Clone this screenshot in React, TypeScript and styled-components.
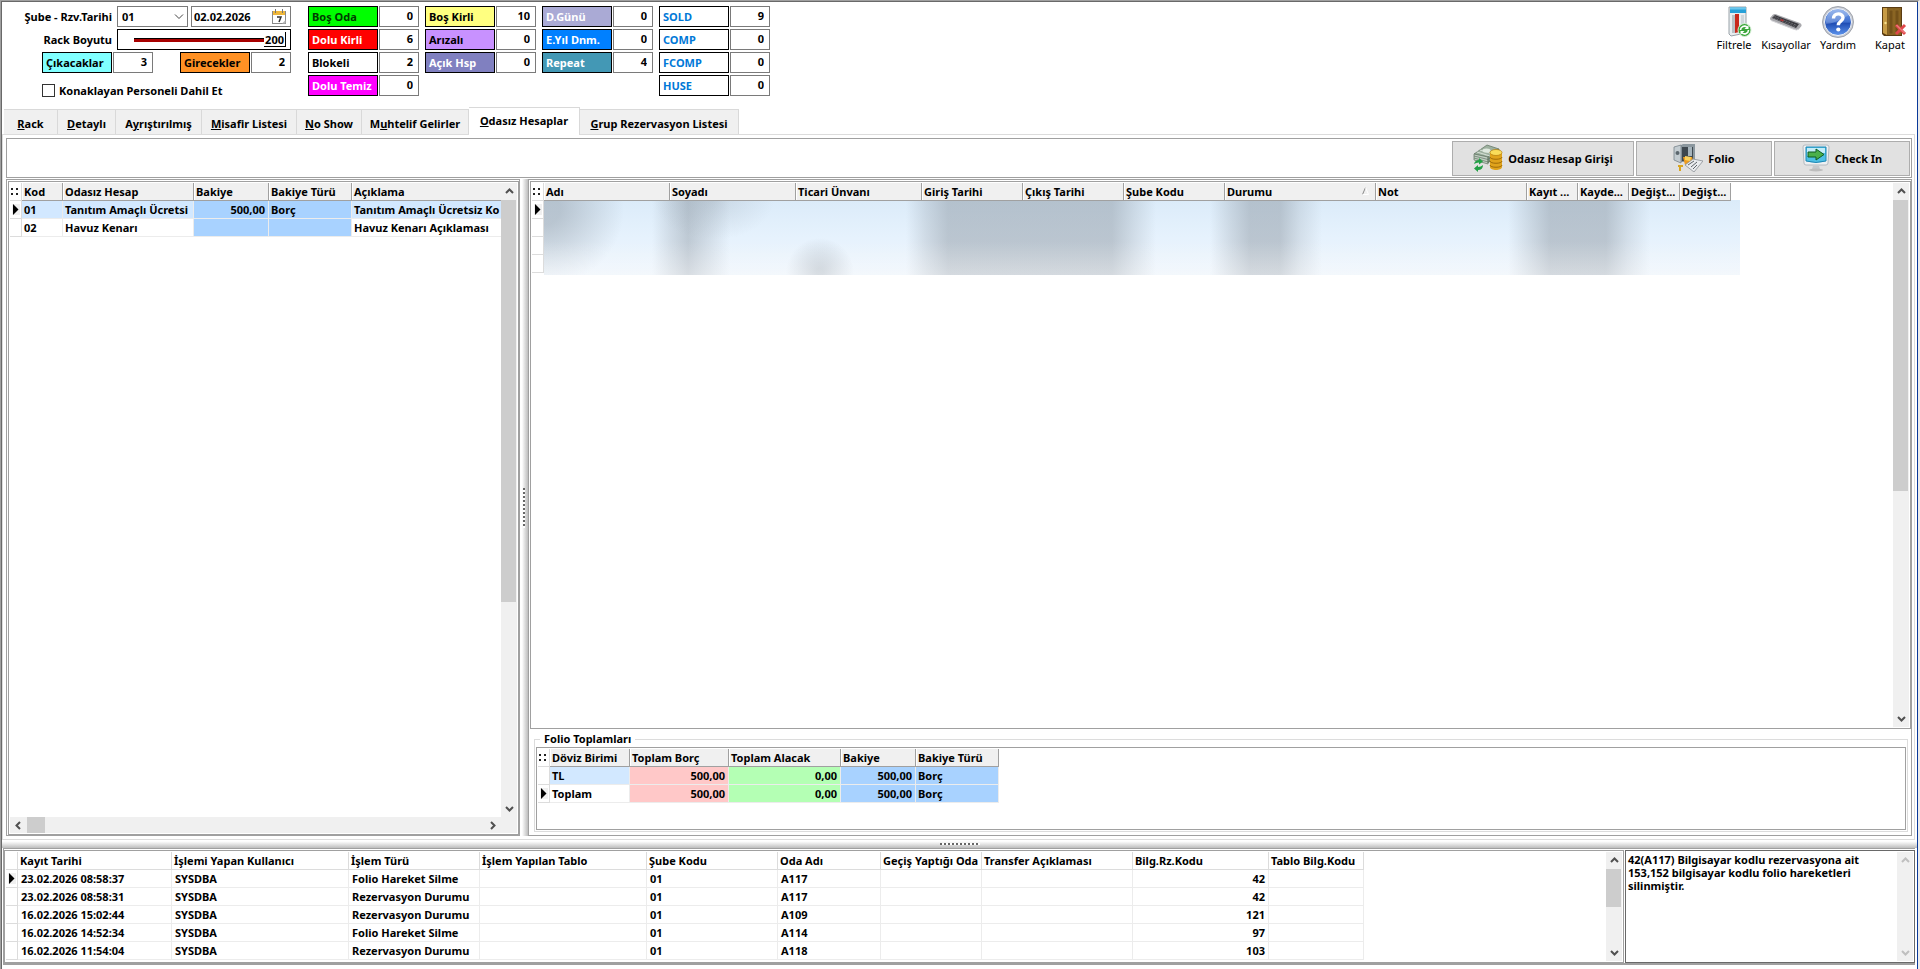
import React from 'react';
import styled, { createGlobalStyle, css } from 'styled-components';

const line = '#a0a0a0';
const soft = '#dcdcdc';
const blueCell = '#a8d2ff';
const selected = '#d2e8ff';

const GlobalStyle = createGlobalStyle`
  *, *::before, *::after { box-sizing: border-box; }
  body { margin: 0; background: #fff; }
  body, button, input, select, textarea, table, fieldset {
    font-family: "Noto Sans", "Open Sans", sans-serif;
    font-size: 11px;
    font-weight: 700;
    color: #000;
  }
`;

/* ---------- window frame ---------- */

const Window = styled.div`
  display: flex;
  flex-direction: column;
  min-height: 100vh;
  padding: 1px 1px 4px 1px;
  border: solid ${line};
  border-width: 1px 0 0 1px;
  border-right: 2px solid #ececec;
  box-shadow: inset 1px 1px #696969, inset -1px 0 #0a3a9a;
`;

const Header = styled.header`
  display: flex;
  align-items: flex-start;
  height: 105px;
  padding: 4px 1px 0 10px;
`;

/* ---------- header form ---------- */

const Form = styled.form`
  display: flex;
  flex-direction: column;
  gap: 2px;
  width: 279px;
  margin-right: 17px;
`;

const FormRow = styled.div`
  display: flex;
  align-items: center;
  justify-content: flex-end;
  height: 21px;
  gap: 5px;
`;

const Fields = styled.div`
  display: flex;
  justify-content: space-between;
  width: 174px;
`;

const CounterRow = styled.div`
  display: flex;
  justify-content: space-between;
  margin-left: 30px;
`;

const CheckRow = styled.div`
  display: flex;
  align-items: center;
  gap: 4px;
  height: 30px;
  margin-left: 30px;
`;

const SelectBox = styled.div`
  position: relative;
  width: 71px;
  height: 21px;
  svg { position: absolute; right: 4px; top: 7px; pointer-events: none; }
`;

const Select = styled.select`
  appearance: none;
  width: 100%;
  height: 100%;
  padding: 0 4px 1px;
  border: 1px solid #7a7a7a;
  border-radius: 0;
  background: #fff;
`;

const DateBox = styled.div`
  display: flex;
  align-items: center;
  width: 100px;
  height: 21px;
  border: 1px solid #7a7a7a;
`;

const DateInput = styled.input`
  flex: 1;
  min-width: 0;
  padding: 0 2px 1px;
  border: 0;
  outline: 0;
`;

const IconButton = styled.button`
  display: flex;
  padding: 0 4px 1px 0;
  border: 0;
  background: none;
`;

const SliderBox = styled.div`
  display: flex;
  align-items: center;
  width: 100%;
  height: 21px;
  padding: 0 4px 0 16px;
  border: 1px solid #000;
`;

const Slider = styled.input`
  appearance: none;
  flex: 1;
  min-width: 0;
  height: 4px;
  margin: 0;
  border-top: 1px solid #000;
  background: #a80000;
  &::-webkit-slider-thumb { appearance: none; width: 0; height: 0; }
`;

const SliderValue = styled.output`
  height: 15px;
  padding: 0 1px 0 1px;
  border: solid #000;
  border-width: 0 1px 1px 0;
  line-height: 15px;
`;

const Checkbox = styled.input`
  appearance: none;
  width: 13px;
  height: 13px;
  margin: 0;
  border: 1px solid #333;
  background: #fff;
`;

/* ---------- coloured counters ---------- */

const Counters = styled.div`
  display: flex;
  align-items: flex-start;
  gap: 6px;
`;

const CounterColumn = styled.div`
  display: flex;
  flex-direction: column;
  gap: 2px;
`;

const Counter = styled.div`
  display: flex;
  gap: 1px;
`;

const CounterLabel = styled.label<{ $bg: string; $fg: string }>`
  width: 70px;
  height: 21px;
  padding-left: 3px;
  border: 1px solid #000;
  line-height: 20px;
  white-space: nowrap;
  background: ${(p) => p.$bg};
  color: ${(p) => p.$fg};
`;

const CounterValue = styled.input`
  width: 40px;
  height: 21px;
  padding: 0 5px 2px 0;
  border: 1px solid #7a7a7a;
  text-align: right;
  background: #fff;
`;

/* ---------- header actions ---------- */

const Actions = styled.nav`
  display: flex;
  margin-left: auto;
`;

const Action = styled.button`
  display: flex;
  flex-direction: column;
  align-items: center;
  width: 52px;
  padding: 0;
  border: 0;
  background: none;
  font-weight: 400;
  line-height: 14px;
  svg { display: block; overflow: visible; }
`;

/* ---------- tabs ---------- */

const Tabs = styled.div`
  display: flex;
  align-items: flex-end;
  height: 27px;
  padding-left: 2px;
`;

const Tab = styled.button<{ $w: number; $active?: boolean }>`
  width: ${(p) => p.$w}px;
  height: 25px;
  padding: 2px 0 0;
  border: solid #d9d9d9;
  border-width: 1px 1px 0 0;
  background: #f0f0f0;
  white-space: nowrap;
  ${(p) =>
    p.$active &&
    css`
      height: 28px;
      margin-bottom: -1px;
      padding: 0 0 3px;
      background: #fff;
      position: relative;
    `}
`;

const TabPanel = styled.main`
  display: flex;
  flex-direction: column;
  flex: 1;
  margin-right: 2px;
  padding: 3px 2px 3px 3px;
  border: 1px solid ${soft};
`;

const Toolbar = styled.div`
  display: flex;
  justify-content: flex-end;
  gap: 2px;
  height: 40px;
  margin-bottom: 1px;
  padding: 2px 1px 1px 0;
  border: 1px solid ${line};
`;

const ToolButton = styled.button<{ $w: number }>`
  display: flex;
  align-items: center;
  justify-content: center;
  gap: 5px;
  width: ${(p) => p.$w}px;
  padding: 0 0 1px;
  border: 1px solid #adadad;
  background: #e1e1e1;
`;

/* ---------- split panels ---------- */

const Split = styled.div`
  display: flex;
  flex: 1;
`;

const Panel = styled.section<{ $w?: number }>`
  display: flex;
  flex-direction: column;
  min-width: 0;
  flex: ${(p) => (p.$w ? `0 0 ${p.$w}px` : '1')};
  border: 1px solid ${line};
  padding: 1px 0 0 1px;
`;

const Well = styled.div`
  display: flex;
  flex: 1;
  min-width: 0;
  border: 1px solid ${line};
  padding: 1px;
`;

const LeftWell = styled(Well)`
  flex-direction: column;
`;

const WellRow = styled.div`
  display: flex;
  flex: 1;
  min-height: 0;
`;

const Viewport = styled.div`
  flex: 1;
  min-width: 0;
  overflow: hidden;
`;

const Splitter = styled.div`
  display: flex;
  align-items: center;
  justify-content: center;
  width: 8px;
  background: linear-gradient(90deg, #fff 25%, #ececec 45%, #bdbdbd);
`;

const HSplitter = styled(Splitter)`
  width: auto;
  height: 8px;
  background: linear-gradient(#fff 15%, #e6e6e6 50%, #bdbdbd);
`;

const Grip = styled.i<{ $h?: boolean }>`
  width: ${(p) => (p.$h ? 40 : 2)}px;
  height: ${(p) => (p.$h ? 2 : 40)}px;
  background: repeating-linear-gradient(
    ${(p) => (p.$h ? '90deg' : '180deg')},
    #666 0 2px,
    #fff 2px 4px
  );
`;

/* ---------- scroll bars ---------- */

const Bar = styled.div<{ $h?: boolean }>`
  display: flex;
  flex-direction: ${(p) => (p.$h ? 'row' : 'column')};
  ${(p) => (p.$h ? 'height: 16px' : 'width: 16px')};
  flex: none;
  background: #f0f0f0;
`;

const BarButton = styled.button<{ $off?: boolean }>`
  display: flex;
  align-items: center;
  justify-content: center;
  flex: 0 0 17px;
  min-width: 16px;
  padding: 0;
  border: 0;
  background: none;
  color: ${(p) => (p.$off ? '#bfbfbf' : '#505050')};
`;

const Track = styled.div`
  flex: 1;
`;

const Thumb = styled.div<{ $size: number; $h?: boolean }>`
  ${(p) => (p.$h ? `width: ${p.$size}%; height: 100%` : `height: ${p.$size}%; width: 15px`)};
  background: #cdcdcd;
`;

const Corner = styled.div`
  display: flex;
  padding-right: 16px;
  background: #f0f0f0;
  > div { flex: 1; }
`;

const arrows = {
  up: 'M1 6 4.500 2.500 8 6',
  down: 'M1 3 4.500 6.500 8 3',
  left: 'M6 1 2.500 4.500 6 8',
  right: 'M3 1 6.500 4.500 3 8',
};

const Arrow = ({ d }: { d: keyof typeof arrows }) => (
  <svg width="9" height="9" viewBox="0 0 9 9" fill="none" stroke="currentColor" strokeWidth="2">
    <path d={arrows[d]} />
  </svg>
);

const ScrollBar = ({ size, h, off }: { size: number; h?: boolean; off?: boolean }) => (
  <Bar $h={h}>
    <BarButton $off={off} type="button" aria-label={h ? 'Sola' : 'Yukarı'}>
      <Arrow d={h ? 'left' : 'up'} />
    </BarButton>
    <Track>{size > 0 && <Thumb $size={size} $h={h} />}</Track>
    <BarButton $off={off} type="button" aria-label={h ? 'Sağa' : 'Aşağı'}>
      <Arrow d={h ? 'right' : 'down'} />
    </BarButton>
  </Bar>
);

/* ---------- data grids ---------- */

const Table = styled.table<{ $w: number }>`
  width: ${(p) => p.$w}px;
  table-layout: fixed;
  border-collapse: separate;
  border-spacing: 0;
`;

const HeadCell = styled.th<{ $flat?: boolean }>`
  position: relative;
  height: 18px;
  padding: 0 0 0 2px;
  border: solid ${(p) => (p.$flat ? soft : line)};
  border-width: 0 1px 1px 0;
  box-shadow: ${(p) => (p.$flat ? 'none' : 'inset 1px 0 #fff')};
  background: ${(p) => (p.$flat ? '#fff' : '#f0f0f0')};
  line-height: 17px;
  text-align: left;
  white-space: nowrap;
  svg { position: absolute; right: 6px; top: 4px; }
`;

const Cell = styled.td<{ $bg?: string; $right?: boolean; $flat?: boolean }>`
  height: 18px;
  padding: 0 3px 0 ${(p) => (p.$flat ? 3 : 2)}px;
  border: solid #ececec;
  border-width: 0 1px 1px 0;
  background: ${(p) => p.$bg || '#fff'};
  line-height: 17px;
  text-align: ${(p) => (p.$right ? 'right' : 'left')};
  white-space: nowrap;
`;

const MarkCell = styled.td`
  height: 18px;
  padding: 0 0 0 2px;
  border: solid ${soft};
  border-width: 0 1px 1px 0;
  line-height: 0;
  svg { display: block; }
`;

const DotsCell = styled.th`
  padding: 0 0 0 1px;
  border: solid ${soft};
  border-width: 0 1px 1px 0;
  svg { display: block; }
`;

const Marker = () => (
  <svg width="8" height="13" viewBox="0 0 8 13">
    <rect x="0" y="1" width="8" height="11" fill="#f0f0f0" />
    <path d="M1 1 6.500 6.500 1 12Z" fill="#000" />
  </svg>
);

const Dots = () => (
  <svg width="8" height="8" viewBox="0 0 8 8" fill="#222">
    <path d="M0 0h2v2H0zM5 0h2v2H5zM0 5h2v2H0zM5 5h2v2H5z" />
  </svg>
);

type Column = { t: string; w: number; right?: boolean; bg?: string; sorted?: boolean };

const Cols = ({ cols }: { cols: Column[] }) => (
  <colgroup>
    <col style={{ width: 12 }} />
    {cols.map((c, i) => (
      <col key={i} style={{ width: c.w }} />
    ))}
  </colgroup>
);

const Head = ({ cols, flat }: { cols: Column[]; flat?: boolean }) => (
  <thead>
    <tr>
      <DotsCell aria-label="Seçim">{!flat && <Dots />}</DotsCell>
      {cols.map((c, i) => (
        <HeadCell key={i} $flat={flat} scope="col">
          {c.t}
          {c.sorted && (
            <svg width="7" height="8" viewBox="0 0 7 8" fill="none">
              <path d="M.5 7.500 3.500.5" stroke="#888" />
              <path d="M3.500.5 6.500 7.500H.5" stroke="#fff" />
            </svg>
          )}
        </HeadCell>
      ))}
    </tr>
  </thead>
);

type GridProps = { cols: Column[]; rows: string[][]; current: number; tinted?: number; flat?: boolean };

const total = (cols: Column[]) => cols.reduce((s, c) => s + c.w, 12);

const Grid = ({ cols, rows, current, tinted, flat }: GridProps) => (
  <Table $w={total(cols)}>
    <Cols cols={cols} />
    <Head cols={cols} flat={flat} />
    <tbody>
      {rows.map((r, i) => (
        <tr key={i}>
          <MarkCell>{i === current && <Marker />}</MarkCell>
          {cols.map((c, j) => (
            <Cell key={j} $flat={flat} $right={c.right} $bg={c.bg || (i === tinted ? selected : undefined)}>
              {r[j]}
            </Cell>
          ))}
        </tr>
      ))}
    </tbody>
  </Table>
);

const MaskCell = styled.td`
  padding: 0;
  vertical-align: top;
`;

const Mask = styled.div`
  width: 1196px;
  height: 75px;
  margin: -1px 0 -2px 0;
  background:
    linear-gradient(rgba(255, 255, 255, 0) 55%, rgba(255, 255, 255, 0.35)),
    radial-gradient(ellipse 80px 76px at 0 10px, rgba(125, 135, 145, 0.4) 20%, rgba(125, 135, 145, 0)),
    radial-gradient(ellipse 34px 34px at 276px 72px, rgba(125, 135, 145, 0.36) 10%, rgba(125, 135, 145, 0)),
    radial-gradient(ellipse 60px 40px at 170px 0, rgba(125, 135, 145, 0.2), rgba(125, 135, 145, 0)),
    linear-gradient(
      90deg,
      transparent 108px, rgba(125, 135, 145, 0.2) 126px, rgba(125, 135, 145, 0.38) 144px, rgba(125, 135, 145, 0.22) 162px, transparent 186px,
      transparent 362px, rgba(125, 135, 145, 0.22) 382px, rgba(125, 135, 145, 0.42) 404px, rgba(125, 135, 145, 0.42) 568px, rgba(125, 135, 145, 0.2) 590px, transparent 612px,
      transparent 666px, rgba(125, 135, 145, 0.22) 686px, rgba(125, 135, 145, 0.42) 706px, rgba(125, 135, 145, 0.42) 736px, rgba(125, 135, 145, 0.18) 756px, transparent 778px,
      transparent 964px, rgba(125, 135, 145, 0.2) 984px, rgba(125, 135, 145, 0.42) 1006px, rgba(125, 135, 145, 0.42) 1062px, rgba(125, 135, 145, 0.18) 1084px, transparent 1106px
    ),
    linear-gradient(#dbebf9, #e6f2fd 50%, #edf4fb);
`;

/* ---------- totals ---------- */

const Totals = styled.fieldset`
  min-width: 0;
  margin: 2px 3px 3px 4px;
  padding: 0 1px 1px;
  border: 1px solid ${soft};
  legend {
    margin-left: 4px;
    padding: 0 4px;
    height: 16px;
    line-height: 16px;
  }
`;

const TotalsWell = styled(Well)`
  align-items: flex-start;
  height: 83px;
`;

/* ---------- log area ---------- */

const Log = styled.section`
  display: flex;
  margin: 0 2px 0 1px;
  border: solid ${line};
  border-width: 1px 0 2px 1px;
  padding: 1px 0 0 0;
`;

const LogWell = styled(Well)`
  height: 113px;
  margin-right: 1px;
`;

const MemoBox = styled.div`
  display: flex;
  width: 290px;
  height: 113px;
  border: 1px solid #696969;
  padding: 1px;
`;

const Memo = styled.textarea`
  flex: 1;
  min-width: 0;
  padding: 1px 0 0 1px;
  border: 0;
  outline: 0;
  resize: none;
  overflow: hidden;
  line-height: 13px;
`;

/* ---------- icons ---------- */

const Calendar = () => (
  <svg width="14" height="15" viewBox="0 0 14 15">
    <rect x=".5" y="2.500" width="13" height="12" fill="#fff" stroke="#8a8a8a" />
    <rect x="1" y="2" width="12" height="4" fill="#efb73a" />
    <path d="M3.500 0v4M10.500 0v4" stroke="#777" />
    <path d="M5 8h4L7 13" fill="none" stroke="#333" strokeWidth="1.500" />
    <path d="M10 14.500 13.500 11v3.500z" fill="#bbb" />
  </svg>
);

const FilterIcon = () => (
  <svg width="32" height="32" viewBox="-4 0 32 32">
    <path d="M7 1h17v26L9 30 7 28z" fill="#e9edf0" stroke="#9aa3a8" />
    <path d="M8 1.500h16V7H8z" fill="#27a0d8" />
    <path d="M8 1.500h16v2H8z" fill="#6cc8ee" />
    <path d="M10 9h3v18h-3z" fill="#b9c1c6" />
    <path d="M13 8h4v18l-4 1z" fill="#c8281c" />
    <path d="M19 9h3v12h-3z" fill="#cfd6da" />
    <circle cx="22.500" cy="24" r="6.500" fill="#3aa63a" stroke="#d8f0d8" />
    <path d="M18.500 24a4 4 0 0 1 6.500-3M26.500 24a4 4 0 0 1-6.500 3" fill="none" stroke="#fff" strokeWidth="1.600" />
    <path d="M26.500 19v4h-4zM18.500 29v-4h4z" fill="#fff" />
  </svg>
);

const KeyboardIcon = () => (
  <svg width="32" height="32" viewBox="0 0 32 32">
    <path d="M0 12 3 8.500Q5 7.500 8 9l22 8q2 1 1.500 3L29 23q-2 2-6 0L1 14.500Q0 13.500 0 12z" fill="#a9a9ad" />
    <path d="M2 12 5 9l24 9-3 4z" fill="#3b3b40" />
    <path d="M4.500 10.500 27 19.500M3.500 12 25 20.500" stroke="#77777d" strokeDasharray="2 1" strokeWidth=".8" />
    <path d="m11 13 3 1-1 1.500-3-1z" fill="#a33" />
    <path d="M1 14.500 23 23q4 2 6 0" fill="none" stroke="#d4d4d8" />
  </svg>
);

const HelpIcon = () => (
  <svg width="32" height="32" viewBox="0 0 32 32">
    <defs>
      <linearGradient id="help" x1="0" y1="0" x2="0" y2="1">
        <stop offset="0" stopColor="#7fa6ea" />
        <stop offset=".5" stopColor="#3c6dce" />
        <stop offset=".55" stopColor="#1f4db4" />
        <stop offset="1" stopColor="#5f96ee" />
      </linearGradient>
    </defs>
    <circle cx="16" cy="16" r="15.500" fill="#c9ccd3" stroke="#8f949e" strokeWidth=".8" />
    <circle cx="16" cy="16" r="13.500" fill="url(#help)" stroke="#f1f3f7" />
    <path d="M4 18C9 18 17 15 27 9 24 4 20 3 16 3 9 3 3 9 4 18z" fill="#fff" opacity=".22" />
    <path d="M11.500 12.500c0-6 9.500-6 9.500-.8 0 3.600-4.700 3.600-4.700 7.500" fill="none" stroke="#fff" strokeWidth="3.400" />
    <circle cx="16.300" cy="23.500" r="2.100" fill="#fff" />
  </svg>
);

const DoorIcon = () => (
  <svg width="32" height="32" viewBox="-1 0 32 32">
    <path d="M7 1h20v29H9l-2-2z" fill="#5a3c12" />
    <path d="M8 2h4v27l-4-2z" fill="#c79b45" />
    <path d="M12 2h14v27H12z" fill="#85601f" />
    <path d="M14 4h4v24h-4zM20 4h4v24h-4z" fill="#735119" stroke="#96702b" strokeWidth=".7" />
    <circle cx="10.500" cy="17" r="1.200" fill="#f6e08e" />
    <path d="m21 19 9 9M30 19l-9 9" stroke="#e0484a" strokeWidth="3" />
    <path d="m21.500 19 8 8" stroke="#f59a98" />
  </svg>
);

const MoneyIcon = () => (
  <svg width="30" height="28" viewBox="0 0 30 28">
    <path d="M1 10 14 1l12 4-11 8z" fill="#9db09f" stroke="#5e7260" strokeWidth=".7" />
    <path d="M1 10v6l14 4v-7z" fill="#c3cfc4" stroke="#5e7260" strokeWidth=".7" />
    <path d="m15 13 11-8v5l-11 9z" fill="#7f9385" stroke="#5e7260" strokeWidth=".7" />
    <path d="M1 12 15 15.500 26 7.500M1 14l14 4 11-8" fill="none" stroke="#5e7260" strokeWidth=".7" />
    <path d="m7 6 13 4M4 8l13 4" stroke="#e3ebe3" strokeWidth=".8" />
    <ellipse cx="13.500" cy="6.500" rx="4" ry="2" fill="#dfe9df" />
    <path d="M17 9v14c0 4 12 4 12 0V9z" fill="#e0a31c" />
    <path d="M17 13c0 3 12 3 12 0M17 17c0 3 12 3 12 0M17 21c0 3 12 3 12 0" fill="none" stroke="#a06c08" />
    <ellipse cx="23" cy="8.500" rx="6" ry="3" fill="#f9dc5a" stroke="#b07a0c" strokeWidth=".7" />
    <path d="M1 20q1-4 5-4v-2l4 3.500-4 3v-2q-3 0-5 1.500zM10 21q0 5-5 5v2l-4-3.500 4-3.500v2q3 0 5-2z" fill="#22a045" />
  </svg>
);

const FolioIcon = () => (
  <svg width="30" height="28" viewBox="0 0 30 28">
    <path d="M6 2 10 0h12v18H6z" fill="#8b979e" />
    <path d="M9 3h11v14H9z" fill="#3d474e" />
    <path d="m1 3 7-2v18l-7-3z" fill="#c3ccd1" stroke="#77838a" strokeWidth=".8" />
    <circle cx="4.500" cy="9" r="2" fill="#5b676e" />
    <path d="M15 3h4v9h-4z" fill="#a5b3bb" />
    <path d="M10 13h9l2 6-9 2z" fill="#ef9d1e" />
    <path d="m12 12 6 1-1 4-5-1z" fill="#fbd35e" />
    <path d="m12 21 8-6 10 2-9 11z" fill="#e9ebee" stroke="#8b9096" strokeWidth=".8" />
    <path d="m15 21 6-4M18 23l6-5M20 25l4-4" stroke="#5d6368" />
    <path d="M5 21h5v2H8v4H6v-4H5z" fill="#d9a520" />
  </svg>
);

const CheckInIcon = () => (
  <svg width="28" height="28" viewBox="0 0 28 28">
    <path d="M3 1h22q2 0 2 2l-1 16q0 2-2 2H4q-2 0-2-2L1 3q0-2 2-2z" fill="#eef0f2" stroke="#b4bac0" />
    <path d="M4 3h20v14q-10 3-20 0z" fill="#4dbfe4" stroke="#1c86b4" />
    <path d="M5 4h18v5Q14 8 5 12z" fill="#c4edf9" />
    <path d="M6 8h8V5l8 5.500-8 5.500v-3H6z" fill="#4bb04b" stroke="#0f5d22" />
    <path d="M11 22h6l1 3h-8z" fill="#c5c9cd" />
    <ellipse cx="14" cy="26" rx="7" ry="1.500" fill="#bdbdbd" />
  </svg>
);

/* ---------- data ---------- */

type CounterData = [label: string, value: string, bg: string, fg: string];

const counterColumns: CounterData[][] = [
  [
    ['Boş Oda', '0', '#00ff00', '#003c00'],
    ['Dolu Kirli', '6', '#ff0000', '#fff'],
    ['Blokeli', '2', '#fff', '#000'],
    ['Dolu Temiz', '0', '#ff00ff', '#fff'],
  ],
  [
    ['Boş Kirli', '10', '#ffff80', '#000'],
    ['Arızalı', '0', '#c891ff', '#000'],
    ['Açık Hsp', '0', '#8080c0', '#fff'],
  ],
  [
    ['D.Günü', '0', '#aaaad5', '#fff'],
    ['E.Yıl Dnm.', '0', '#0080ff', '#fff'],
    ['Repeat', '4', '#4398b5', '#fff'],
  ],
  [
    ['SOLD', '9', '#fff', '#0078d7'],
    ['COMP', '0', '#fff', '#0078d7'],
    ['FCOMP', '0', '#fff', '#0078d7'],
    ['HUSE', '0', '#fff', '#0078d7'],
  ],
];

const tabs: { t: string; u: number; w: number; active?: boolean }[] = [
  { t: 'Rack', u: 0, w: 54 },
  { t: 'Detaylı', u: 0, w: 58 },
  { t: 'Ayrıştırılmış', u: 1, w: 86 },
  { t: 'Misafir Listesi', u: 0, w: 95 },
  { t: 'No Show', u: 0, w: 65 },
  { t: 'Muhtelif Gelirler', u: 1, w: 107 },
  { t: 'Odasız Hesaplar', u: 0, w: 111, active: true },
  { t: 'Grup Rezervasyon Listesi', u: 0, w: 159 },
];

const accountCols: Column[] = [
  { t: 'Kod', w: 41 },
  { t: 'Odasız Hesap', w: 131 },
  { t: 'Bakiye', w: 75, right: true, bg: blueCell },
  { t: 'Bakiye Türü', w: 83, bg: blueCell },
  { t: 'Açıklama', w: 160 },
];

const accountRows = [
  ['01', 'Tanıtım Amaçlı Ücretsi', '500,00', 'Borç', 'Tanıtım Amaçlı Ücretsiz Ko'],
  ['02', 'Havuz Kenarı', '', '', 'Havuz Kenarı Açıklaması'],
];

const guestCols: Column[] = [
  { t: 'Adı', w: 126 },
  { t: 'Soyadı', w: 126 },
  { t: 'Ticari Ünvanı', w: 126 },
  { t: 'Giriş Tarihi', w: 101 },
  { t: 'Çıkış Tarihi', w: 101 },
  { t: 'Şube Kodu', w: 101 },
  { t: 'Durumu', w: 151, sorted: true },
  { t: 'Not', w: 151 },
  { t: 'Kayıt ...', w: 51 },
  { t: 'Kayde...', w: 51 },
  { t: 'Değişt...', w: 51 },
  { t: 'Değişt...', w: 51 },
];

const totalCols: Column[] = [
  { t: 'Döviz Birimi', w: 80 },
  { t: 'Toplam Borç', w: 99, right: true, bg: '#ffc8c8' },
  { t: 'Toplam Alacak', w: 112, right: true, bg: '#b4ffb4' },
  { t: 'Bakiye', w: 75, right: true, bg: blueCell },
  { t: 'Bakiye Türü', w: 83, bg: blueCell },
];

const totalRows = [
  ['TL', '500,00', '0,00', '500,00', 'Borç'],
  ['Toplam', '500,00', '0,00', '500,00', 'Borç'],
];

const logCols: Column[] = [
  { t: 'Kayıt Tarihi', w: 154 },
  { t: 'İşlemi Yapan Kullanıcı', w: 177 },
  { t: 'İşlem Türü', w: 131 },
  { t: 'İşlem Yapılan Tablo', w: 167 },
  { t: 'Şube Kodu', w: 131 },
  { t: 'Oda Adı', w: 103 },
  { t: 'Geçiş Yaptığı Oda', w: 101 },
  { t: 'Transfer Açıklaması', w: 151 },
  { t: 'Bilg.Rz.Kodu', w: 136, right: true },
  { t: 'Tablo Bilg.Kodu', w: 95 },
];

const logRows = [
  ['23.02.2026 08:58:37', 'SYSDBA', 'Folio Hareket Silme', '', '01', 'A117', '', '', '42', ''],
  ['23.02.2026 08:58:31', 'SYSDBA', 'Rezervasyon Durumu', '', '01', 'A117', '', '', '42', ''],
  ['16.02.2026 15:02:44', 'SYSDBA', 'Rezervasyon Durumu', '', '01', 'A109', '', '', '121', ''],
  ['16.02.2026 14:52:34', 'SYSDBA', 'Folio Hareket Silme', '', '01', 'A114', '', '', '97', ''],
  ['16.02.2026 11:54:04', 'SYSDBA', 'Rezervasyon Durumu', '', '01', 'A118', '', '', '103', ''],
];

const CounterItem = ({ item: [label, value, bg, fg] }: { item: CounterData }) => {
  const id = 'c-' + label.replace(/\W/g, '');
  return (
    <Counter>
      <CounterLabel htmlFor={id} $bg={bg} $fg={fg}>{label}</CounterLabel>
      <CounterValue id={id} readOnly value={value} />
    </Counter>
  );
};

export default function App() {
  return (
    <Window>
      <GlobalStyle />
      <Header>
        <Form>
          <FormRow>
            <label htmlFor="branch">Şube - Rzv.Tarihi</label>
            <Fields>
              <SelectBox>
                <Select id="branch" defaultValue="01">
                  <option>01</option>
                </Select>
                <svg width="10" height="7" viewBox="0 0 10 7" fill="none" stroke="#444">
                  <path d="m1 1.500 4 4 4-4" />
                </svg>
              </SelectBox>
              <DateBox>
                <DateInput aria-label="Rzv.Tarihi" defaultValue="02.02.2026" />
                <IconButton type="button" aria-label="Takvim"><Calendar /></IconButton>
              </DateBox>
            </Fields>
          </FormRow>
          <FormRow>
            <label htmlFor="rack">Rack Boyutu</label>
            <Fields>
              <SliderBox>
                <Slider id="rack" type="range" min={0} max={200} defaultValue={200} />
                <SliderValue htmlFor="rack">200</SliderValue>
              </SliderBox>
            </Fields>
          </FormRow>
          <CounterRow>
            <CounterItem item={['Çıkacaklar', '3', '#80ffff', '#000']} />
            <CounterItem item={['Girecekler', '2', '#ff9124', '#000']} />
          </CounterRow>
          <CheckRow>
            <Checkbox id="staff" type="checkbox" />
            <label htmlFor="staff">Konaklayan Personeli Dahil Et</label>
          </CheckRow>
        </Form>
        <Counters>
          {counterColumns.map((col, i) => (
            <CounterColumn key={i}>
              {col.map((c) => <CounterItem key={c[0]} item={c} />)}
            </CounterColumn>
          ))}
        </Counters>
        <Actions>
          <Action type="button"><FilterIcon />Filtrele</Action>
          <Action type="button"><KeyboardIcon />Kısayollar</Action>
          <Action type="button"><HelpIcon />Yardım</Action>
          <Action type="button"><DoorIcon />Kapat</Action>
        </Actions>
      </Header>

      <Tabs role="tablist">
        {tabs.map(({ t, u, w, active }) => (
          <Tab key={t} $w={w} $active={active} role="tab" aria-selected={!!active}>
            {t.slice(0, u)}<u>{t[u]}</u>{t.slice(u + 1)}
          </Tab>
        ))}
      </Tabs>

      <TabPanel>
        <Toolbar>
          <ToolButton $w={182} type="button"><MoneyIcon />Odasız Hesap Girişi</ToolButton>
          <ToolButton $w={136} type="button"><FolioIcon />Folio</ToolButton>
          <ToolButton $w={136} type="button"><CheckInIcon />Check In</ToolButton>
        </Toolbar>

        <Split>
          <Panel $w={514}>
            <LeftWell>
              <WellRow>
                <Viewport>
                  <Grid cols={accountCols} rows={accountRows} current={0} tinted={0} />
                </Viewport>
                <ScrollBar size={67} />
              </WellRow>
              <Corner><ScrollBar size={4} h /></Corner>
            </LeftWell>
          </Panel>

          <Splitter><Grip /></Splitter>

          <Panel>
            <Well>
              <Viewport>
                <Table $w={total(guestCols)}>
                  <Cols cols={guestCols} />
                  <Head cols={guestCols} />
                  <tbody>
                    {[0, 1, 2, 3].map((i) => (
                      <tr key={i}>
                        <MarkCell>{i === 0 && <Marker />}</MarkCell>
                        {i === 0 && (
                          <MaskCell rowSpan={4} colSpan={12}><Mask /></MaskCell>
                        )}
                      </tr>
                    ))}
                  </tbody>
                </Table>
              </Viewport>
              <ScrollBar size={57} />
            </Well>
            <Totals>
              <legend>Folio Toplamları</legend>
              <TotalsWell>
                <Grid cols={totalCols} rows={totalRows} current={1} tinted={0} />
              </TotalsWell>
            </Totals>
          </Panel>
        </Split>
      </TabPanel>

      <HSplitter><Grip $h /></HSplitter>

      <Log>
        <LogWell>
          <Viewport>
            <Grid cols={logCols} rows={logRows} current={0} flat />
          </Viewport>
          <ScrollBar size={50} />
        </LogWell>
        <MemoBox>
          <Memo
            aria-label="Açıklama"
            readOnly
            value="42(A117) Bilgisayar kodlu rezervasyona ait 153,152 bilgisayar kodlu folio hareketleri silinmiştir."
          />
          <ScrollBar size={0} off />
        </MemoBox>
      </Log>
    </Window>
  );
}
